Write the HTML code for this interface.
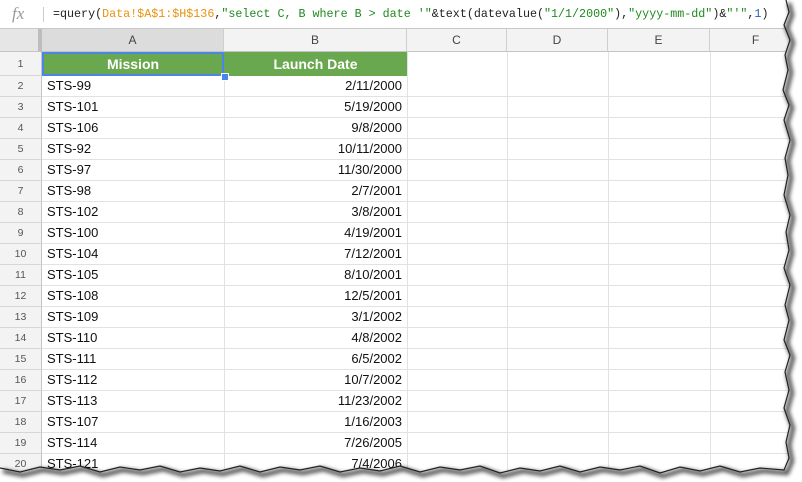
<!DOCTYPE html>
<html><head><meta charset="utf-8"><style>
body{margin:0;width:802px;height:482px;overflow:hidden;background:#fff;font-family:"Liberation Sans",Arial,sans-serif;position:relative}
.a{position:absolute}
.fb{left:0;top:0;width:802px;height:28px;background:#fff;border-bottom:1px solid #c8c8c8}
.fx{left:12px;top:4px;font-family:"Liberation Serif",serif;font-style:italic;font-size:17px;color:#9a9a9a}
.sep{left:43px;top:7px;width:1px;height:15px;background:#ccc}
.fm{left:53px;top:7px;font-family:"Liberation Mono",monospace;font-size:11.7px;color:#222;white-space:pre}
.o{color:#e8930c}.g{color:#1e8a1e}.b{color:#2f5fb3}
.ch{top:29px;height:23px;background:#f3f3f3;border-right:1px solid #cfcfcf;border-bottom:1px solid #c4c4c4;box-sizing:border-box;text-align:center;font-size:12px;color:#444;line-height:23px}
.rh{left:0;width:42px;height:21px;background:#f3f3f3;border-right:1px solid #c4c4c4;border-bottom:1px solid #d6d6d6;box-sizing:border-box;text-align:center;font-size:10.5px;color:#555;line-height:21px}
.r{left:42px;width:760px;height:21px;border-bottom:1px solid #e2e2e2;box-sizing:border-box;font-size:13px;color:#111;line-height:20px}
.r span{position:absolute}
.m{left:5px}.d{right:400px}
.v{top:52px;width:1px;height:430px;background:#e2e2e2}
</style></head><body>
<div class="a fb"></div>
<div class="a fx">fx</div><div class="a sep"></div>
<div class="a fm">=query(<span class="o">Data!$A$1:$H$136</span>,<span class="g">"select C, B where B &gt; date '"</span>&amp;text(datevalue(<span class="g">"1/1/2000"</span>),<span class="g">"yyyy-mm-dd"</span>)&amp;<span class="g">"'"</span>,<span class="b">1</span>)</div>
<div class="a ch" style="left:0;width:42px;background:#e6e6e6;border-right:4px solid #bdbdbd"></div>
<div class="a ch" style="left:42px;width:182px;background:#dcdcdc">A</div>
<div class="a ch" style="left:224px;width:183px">B</div>
<div class="a ch" style="left:407px;width:100px">C</div>
<div class="a ch" style="left:507px;width:101px">D</div>
<div class="a ch" style="left:608px;width:102px">E</div>
<div class="a ch" style="left:710px;width:92px">F</div>
<div class="a v" style="left:224px"></div><div class="a v" style="left:407px"></div><div class="a v" style="left:507px"></div><div class="a v" style="left:608px"></div><div class="a v" style="left:710px"></div>
<div class="a rh" style="top:52px;height:24px;line-height:24px">1</div>
<div class="a" style="left:42px;top:52px;width:182px;height:24px;background:#6aa84f;box-sizing:border-box;border:2px solid #4a86e8;color:#fff;font-weight:bold;font-size:14px;text-align:center;line-height:20px">Mission</div>
<div class="a" style="left:224px;top:52px;width:183px;height:24px;background:#6aa84f;color:#fff;font-weight:bold;font-size:14px;text-align:center;line-height:24px">Launch Date</div>
<div class="a" style="left:221px;top:73px;width:6px;height:6px;background:#4a86e8;border:1px solid #fff"></div>
<div class="a rh" style="top:76px">2</div><div class="a r" style="top:76px"><span class="m">STS-99</span><span class="d">2/11/2000</span></div>
<div class="a rh" style="top:97px">3</div><div class="a r" style="top:97px"><span class="m">STS-101</span><span class="d">5/19/2000</span></div>
<div class="a rh" style="top:118px">4</div><div class="a r" style="top:118px"><span class="m">STS-106</span><span class="d">9/8/2000</span></div>
<div class="a rh" style="top:139px">5</div><div class="a r" style="top:139px"><span class="m">STS-92</span><span class="d">10/11/2000</span></div>
<div class="a rh" style="top:160px">6</div><div class="a r" style="top:160px"><span class="m">STS-97</span><span class="d">11/30/2000</span></div>
<div class="a rh" style="top:181px">7</div><div class="a r" style="top:181px"><span class="m">STS-98</span><span class="d">2/7/2001</span></div>
<div class="a rh" style="top:202px">8</div><div class="a r" style="top:202px"><span class="m">STS-102</span><span class="d">3/8/2001</span></div>
<div class="a rh" style="top:223px">9</div><div class="a r" style="top:223px"><span class="m">STS-100</span><span class="d">4/19/2001</span></div>
<div class="a rh" style="top:244px">10</div><div class="a r" style="top:244px"><span class="m">STS-104</span><span class="d">7/12/2001</span></div>
<div class="a rh" style="top:265px">11</div><div class="a r" style="top:265px"><span class="m">STS-105</span><span class="d">8/10/2001</span></div>
<div class="a rh" style="top:286px">12</div><div class="a r" style="top:286px"><span class="m">STS-108</span><span class="d">12/5/2001</span></div>
<div class="a rh" style="top:307px">13</div><div class="a r" style="top:307px"><span class="m">STS-109</span><span class="d">3/1/2002</span></div>
<div class="a rh" style="top:328px">14</div><div class="a r" style="top:328px"><span class="m">STS-110</span><span class="d">4/8/2002</span></div>
<div class="a rh" style="top:349px">15</div><div class="a r" style="top:349px"><span class="m">STS-111</span><span class="d">6/5/2002</span></div>
<div class="a rh" style="top:370px">16</div><div class="a r" style="top:370px"><span class="m">STS-112</span><span class="d">10/7/2002</span></div>
<div class="a rh" style="top:391px">17</div><div class="a r" style="top:391px"><span class="m">STS-113</span><span class="d">11/23/2002</span></div>
<div class="a rh" style="top:412px">18</div><div class="a r" style="top:412px"><span class="m">STS-107</span><span class="d">1/16/2003</span></div>
<div class="a rh" style="top:433px">19</div><div class="a r" style="top:433px"><span class="m">STS-114</span><span class="d">7/26/2005</span></div>
<div class="a rh" style="top:454px">20</div><div class="a r" style="top:454px"><span class="m">STS-121</span><span class="d">7/4/2006</span></div>
<svg class="a" style="left:0;top:0" width="802" height="482">
<defs><filter id="s" x="-10%" y="-10%" width="120%" height="120%"><feGaussianBlur stdDeviation="2.2"/></filter></defs>
<path fill-rule="evenodd" fill="#fff" d="M-10,-10 H812 V492 H-10 Z M-10,-10 L786,-10 L786,0 L789,12 L784,25 L790,40 L785,55 L788,70 L783,90 L789,105 L784,120 L790,140 L785,158 L788,175 L784,195 L790,215 L786,232 L789,250 L784,268 L790,285 L785,305 L789,320 L784,340 L790,355 L785,372 L789,390 L784,408 L790,425 L786,442 L789,458 L784,470 L760,468 L740,472 L720,466 L700,471 L680,467 L660,473 L640,466 L620,470 L600,467 L580,472 L560,466 L540,471 L520,468 L500,473 L480,466 L460,470 L440,467 L420,472 L400,466 L380,471 L360,468 L340,472 L320,466 L300,470 L280,467 L260,472 L240,466 L220,471 L200,468 L180,472 L160,466 L140,470 L120,467 L100,472 L80,466 L60,470 L40,467 L20,472 L0,468 L-10,468 Z"/>
<path d="M786,0 L789,12 L784,25 L790,40 L785,55 L788,70 L783,90 L789,105 L784,120 L790,140 L785,158 L788,175 L784,195 L790,215 L786,232 L789,250 L784,268 L790,285 L785,305 L789,320 L784,340 L790,355 L785,372 L789,390 L784,408 L790,425 L786,442 L789,458 L784,470 L760,468 L740,472 L720,466 L700,471 L680,467 L660,473 L640,466 L620,470 L600,467 L580,472 L560,466 L540,471 L520,468 L500,473 L480,466 L460,470 L440,467 L420,472 L400,466 L380,471 L360,468 L340,472 L320,466 L300,470 L280,467 L260,472 L240,466 L220,471 L200,468 L180,472 L160,466 L140,470 L120,467 L100,472 L80,466 L60,470 L40,467 L20,472 L0,468" fill="none" stroke="#000" stroke-width="4" transform="translate(3,3)" filter="url(#s)" opacity=".75"/>
<path d="M786,0 L789,12 L784,25 L790,40 L785,55 L788,70 L783,90 L789,105 L784,120 L790,140 L785,158 L788,175 L784,195 L790,215 L786,232 L789,250 L784,268 L790,285 L785,305 L789,320 L784,340 L790,355 L785,372 L789,390 L784,408 L790,425 L786,442 L789,458 L784,470 L760,468 L740,472 L720,466 L700,471 L680,467 L660,473 L640,466 L620,470 L600,467 L580,472 L560,466 L540,471 L520,468 L500,473 L480,466 L460,470 L440,467 L420,472 L400,466 L380,471 L360,468 L340,472 L320,466 L300,470 L280,467 L260,472 L240,466 L220,471 L200,468 L180,472 L160,466 L140,470 L120,467 L100,472 L80,466 L60,470 L40,467 L20,472 L0,468" fill="none" stroke="#222" stroke-width="1.2"/>
</svg>
</body></html>
